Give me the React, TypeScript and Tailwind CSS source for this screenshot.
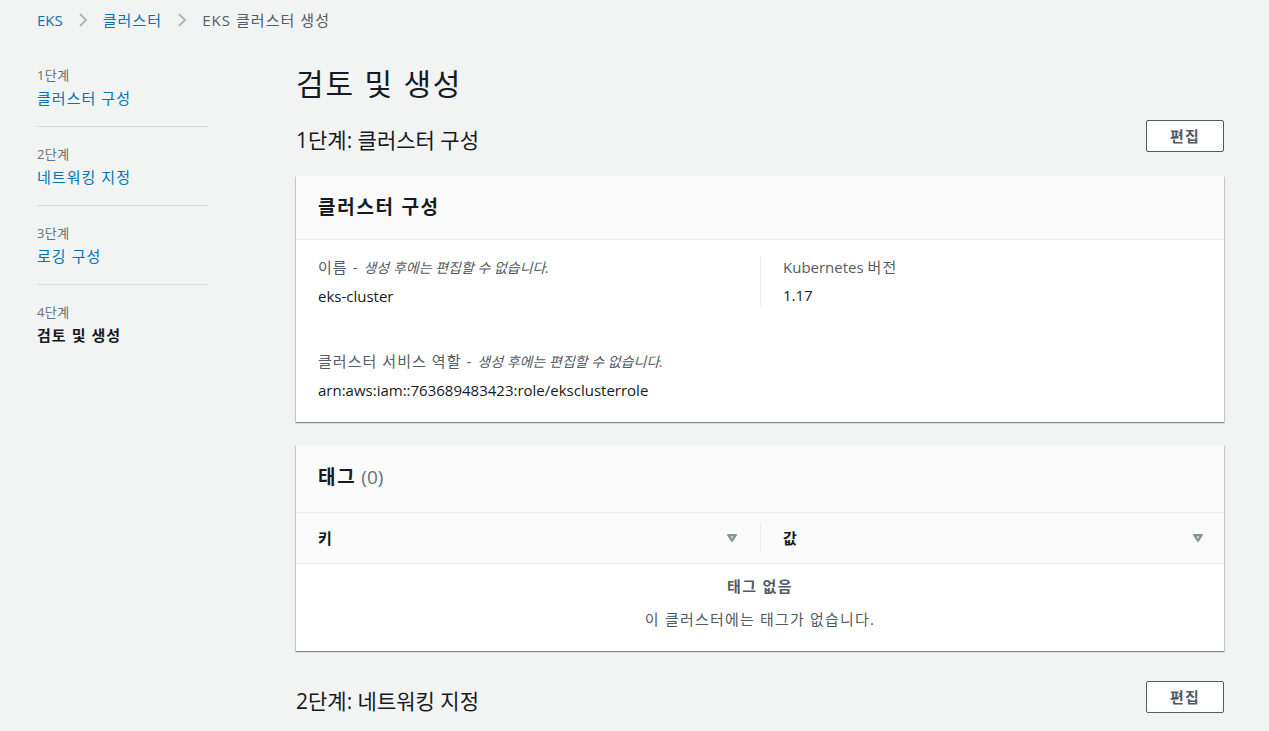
import React from "react";

const font = { fontFamily: '"Open Sans", "Noto Sans CJK KR", sans-serif' };

function Chevron() {
  return (
    <svg width="10" height="14" viewBox="0 0 10 14" className="mx-[15px]">
      <path d="M2 1l6 6-6 6" fill="none" stroke="#aab7b8" strokeWidth="2" />
    </svg>
  );
}

function Tri() {
  return (
    <svg width="12" height="10" viewBox="0 0 12 10">
      <path d="M2 2h8L6 8z" fill="#879596" stroke="#879596" strokeWidth="2" strokeLinejoin="round" />
      <path d="M4.6 3.6h2.8L6 5.6z" fill="#fafafa" />
    </svg>
  );
}

function EditBtn() {
  return (
    <button className="h-[32px] w-[78px] rounded-[2px] border border-[#545b64] bg-white text-[15px] font-bold tracking-[0.08em] text-[#545b64]">
      편집
    </button>
  );
}

const steps = [
  { n: "1단계", t: "클러스터 구성" },
  { n: "2단계", t: "네트워킹 지정" },
  { n: "3단계", t: "로깅 구성" },
];

const cardShadow =
  "bg-white shadow-[0_1px_1px_0_rgba(0,28,36,0.3),1px_1px_1px_0_rgba(0,28,36,0.15),-1px_1px_1px_0_rgba(0,28,36,0.15)]";

export default function App() {
  return (
    <div className="min-h-[731px] w-full bg-[#f2f3f3] text-[#16191f]" style={font}>
      <div className="flex h-[40px] items-center pl-[37px] text-[15px]">
        <span className="text-[#0073bb]">EKS</span>
        <Chevron />
        <span className="tracking-[0.07em] text-[#0073bb]">클러스터</span>
        <Chevron />
        <span className="tracking-[0.07em] text-[#545b64]">EKS 클러스터 생성</span>
      </div>
      <div className="flex pr-[45px]">
        <div className="ml-[37px] w-[171px] shrink-0 pt-[26px]">
          {steps.map((s) => (
            <div key={s.n} className="mb-[18px] border-b border-[#d5dbdb] pb-[16px]">
              <div className="text-[13px] leading-[18px] tracking-[0.03em] text-[#687078]">{s.n}</div>
              <div className="mt-[2px] text-[15px] leading-[24px] tracking-[0.07em] text-[#0073bb]">{s.t}</div>
            </div>
          ))}
          <div>
            <div className="text-[13px] leading-[18px] tracking-[0.03em] text-[#687078]">4단계</div>
            <div className="mt-[2px] text-[15px] font-bold leading-[24px] tracking-[0.07em] text-[#16191f]">
              검토 및 생성
            </div>
          </div>
        </div>
        <div className="ml-[88px] flex-1">
          <h1 className="pt-[24px] text-[30px] leading-[40px] tracking-[0.06em] text-[#16191f]">검토 및 생성</h1>
          <div className="mt-[16px] flex items-start justify-between">
            <h2 className="pt-[4px] text-[21px] leading-[32px]">1단계: 클러스터 구성</h2>
            <EditBtn />
          </div>
          <div className={"mt-[20px] " + cardShadow}>
            <div className="flex h-[64px] items-center border-b border-[#eaeded] bg-[#fafafa] px-[22px]">
              <h3 className="text-[19px] font-bold tracking-[0.09em]">클러스터 구성</h3>
            </div>
            <div className="px-[22px] pb-[21px] pt-[16px] text-[15px]">
              <div className="grid grid-cols-2">
                <div className="pr-[20px]">
                  <div className="leading-[22px] text-[#545b64]">
                    <span className="tracking-[0.07em]">이름 - </span>
                    <i className="text-[14px]">생성 후에는 편집할 수 없습니다.</i>
                  </div>
                  <div className="mt-[6px] leading-[22px]">eks-cluster</div>
                </div>
                <div className="border-l border-[#eaeded] pl-[22px]">
                  <div className="leading-[22px] text-[#545b64]">
                    Kubernetes <span className="tracking-[0.07em]">버전</span>
                  </div>
                  <div className="mt-[6px] leading-[22px]">1.17</div>
                </div>
              </div>
              <div className="mt-[43px] leading-[22px] text-[#545b64]">
                <span className="tracking-[0.07em]">클러스터 서비스 역할 - </span>
                <i className="text-[14px]">생성 후에는 편집할 수 없습니다.</i>
              </div>
              <div className="mt-[6px] leading-[22px]">arn:aws:iam::763689483423:role/eksclusterrole</div>
            </div>
          </div>
          <div className={"mt-[23px] " + cardShadow}>
            <div className="flex h-[68px] items-center border-b border-[#eaeded] bg-[#fafafa] px-[22px] pb-[3px]">
              <h3 className="text-[19px] font-bold">
                <span className="tracking-[0.09em]">태그</span>{" "}
                <span className="font-normal text-[#687078]">(0)</span>
              </h3>
            </div>
            <div className="grid h-[51px] grid-cols-2 border-b border-[#eaeded] bg-[#fafafa] text-[15px] font-bold">
              <div className="flex items-center justify-between pl-[22px] pr-[22px]">
                <span>키</span>
                <Tri />
              </div>
              <div className="my-[10px] flex items-center justify-between border-l border-[#eaeded] pl-[22px] pr-[20px]">
                <span>값</span>
                <Tri />
              </div>
            </div>
            <div className="flex flex-col items-center pb-[21px] pt-[11px] text-[15px] text-[#545b64]">
              <div className="font-bold leading-[22px] tracking-[0.09em]">태그 없음</div>
              <div className="mt-[11px] leading-[22px] tracking-[0.08em]">이 클러스터에는 태그가 없습니다.</div>
            </div>
          </div>
          <div className="mt-[30px] flex items-start justify-between">
            <h2 className="pt-[4px] text-[21px] leading-[32px]">2단계: 네트워킹 지정</h2>
            <EditBtn />
          </div>
        </div>
      </div>
    </div>
  );
}
